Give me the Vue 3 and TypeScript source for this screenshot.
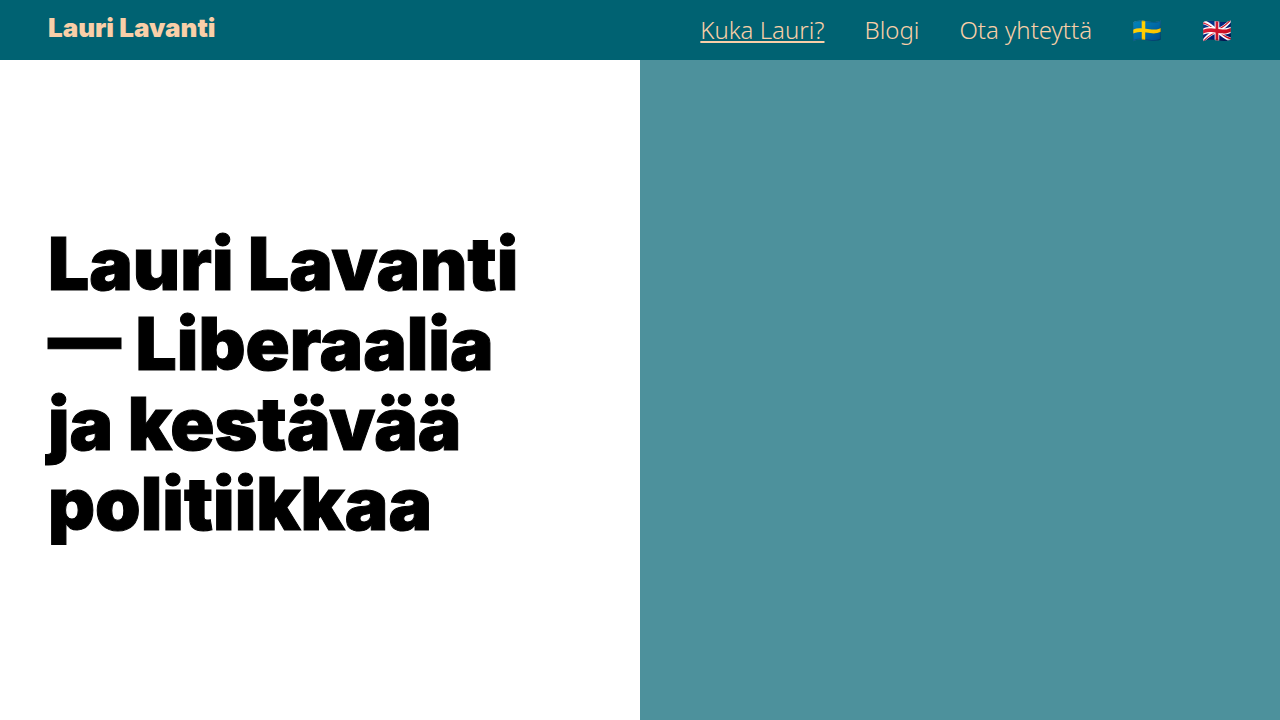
<script setup lang="ts">
interface NavItem {
  label: string
  href: string
  current?: boolean
  name?: string
}

const items: NavItem[] = [
  { label: 'Kuka Lauri?', href: '#kuka', current: true },
  { label: 'Blogi', href: '#blogi' },
  { label: 'Ota yhteyttä', href: '#yhteys' },
  { label: '🇸🇪', href: '#sv', name: 'Svenska' },
  { label: '🇬🇧', href: '#en', name: 'English' },
]
const headingLines: string[] = ['Lauri Lavanti', '— Liberaalia', 'ja kestävää', 'politiikkaa']
</script>

<template>
  <div class="page">
    <header class="bar">
      <a class="brand" href="#">Lauri Lavanti</a>
      <nav class="nav">
        <a
          v-for="item in items"
          :key="item.href"
          :href="item.href"
          :aria-label="item.name"
          :class="{ current: item.current }"
        >{{ item.label }}</a>
      </nav>
    </header>
    <main class="hero">
      <div class="intro">
        <h1><span v-for="line in headingLines" :key="line">{{ line }} </span></h1>
      </div>
      <div class="panel"></div>
    </main>
  </div>
</template>

<style scoped>
.page {
  min-height: 100vh;
  display: flex;
  flex-direction: column;
}
.bar {
  display: flex;
  justify-content: space-between;
  align-items: center;
  min-height: 60px;
  padding: 0 48px;
  box-sizing: border-box;
  background: #006272;
}
.brand {
  padding-bottom: 4px;
  font: 900 26px/32px Inter, sans-serif;
  color: #f9cfa8;
  text-decoration: none;
}
.nav {
  display: flex;
  gap: 40px;
}
.nav a {
  font: 350 24px/32px "Noto Sans", sans-serif;
  color: #f9cfa8;
  text-decoration: none;
}
.nav a.current {
  text-decoration: underline 2px;
  text-underline-offset: 2px;
}
.hero {
  flex: 1;
  display: grid;
  grid-template-columns: 1fr 1fr;
}
.intro {
  display: flex;
  align-items: center;
  padding: 0 48px 12px;
}
h1 {
  margin: 0;
  font: 900 73px/80px Inter, sans-serif;
  -webkit-text-stroke: 1px #000;
  color: #000;
}
h1 span {
  display: block;
}
.panel {
  background: #4d919c;
}
</style>
